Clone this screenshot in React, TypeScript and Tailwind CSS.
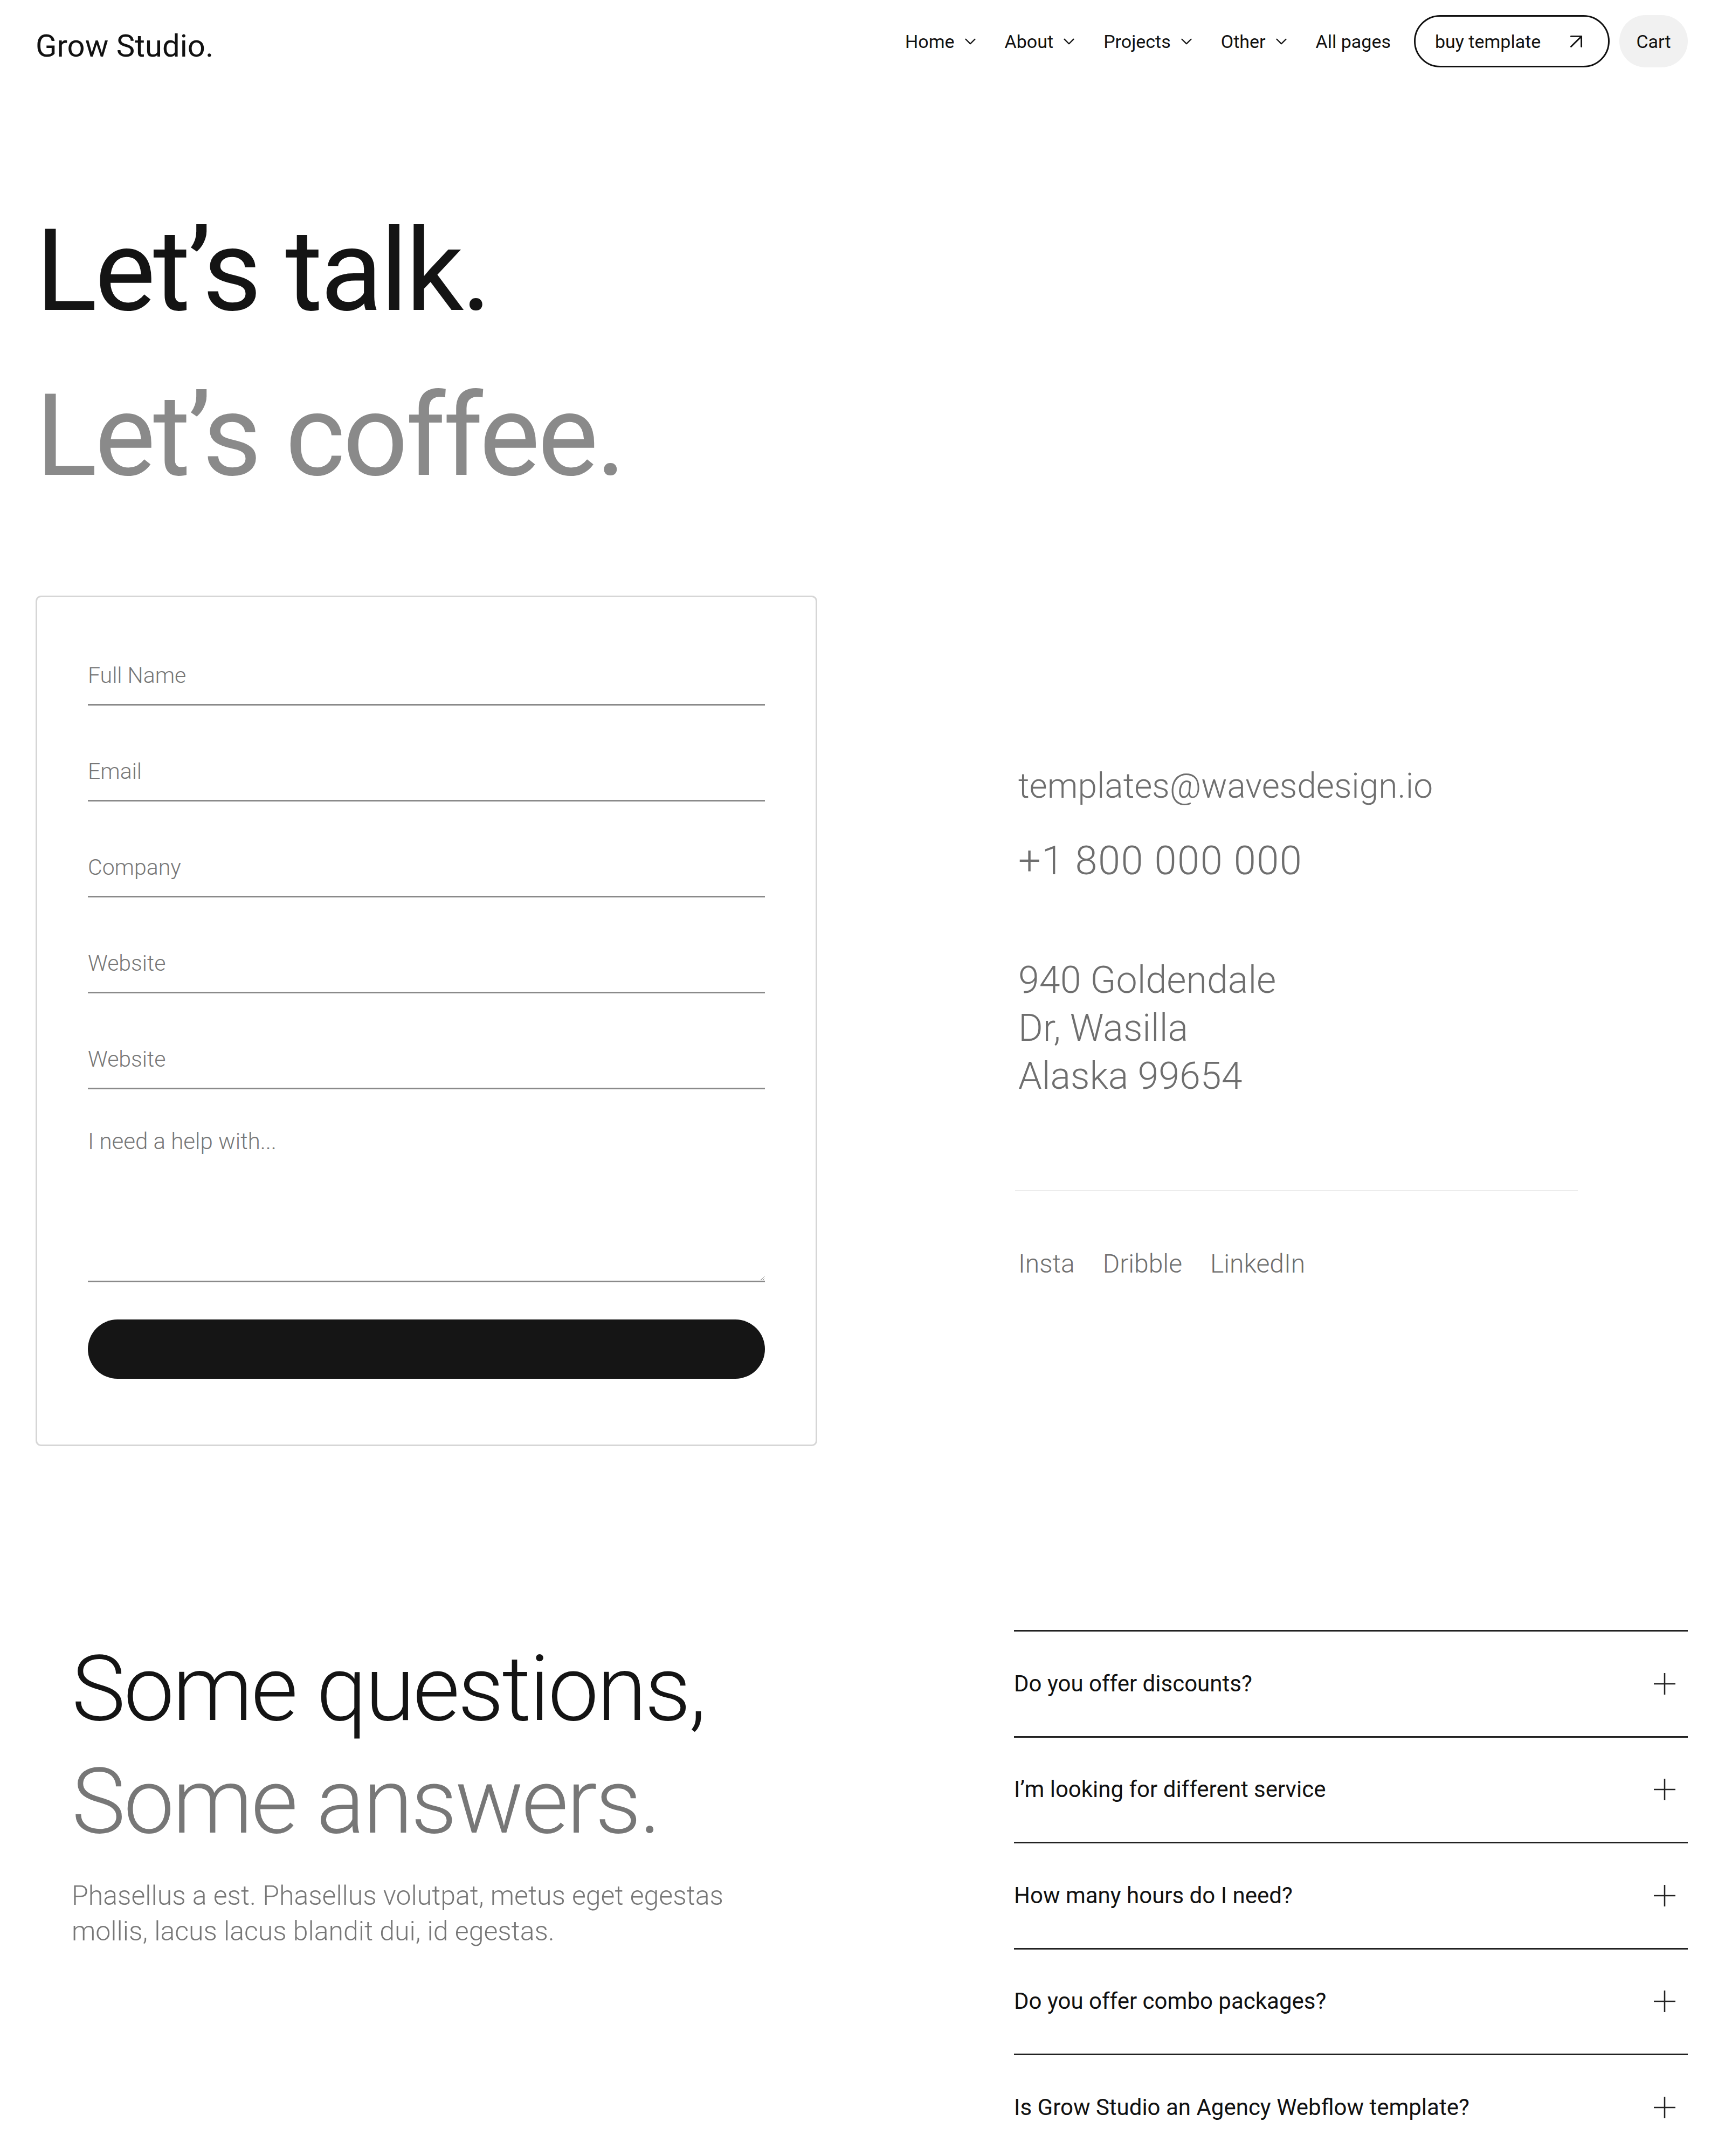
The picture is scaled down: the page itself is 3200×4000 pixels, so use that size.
import React from "react";
import { ChevronDown, ArrowUpRight } from "lucide-react";

const font = "font-['Roboto','Liberation_Sans',sans-serif]";

function NavLink({ label, chevron = true }: { label: string; chevron?: boolean }) {
  return (
    <div className="flex items-center gap-[12px] text-[34px] text-[#111] leading-none">
      <span>{label}</span>
      {chevron && <ChevronDown size={34} strokeWidth={1.7} className="text-[#111]" />}
    </div>
  );
}

function Plus() {
  return (
    <svg width="42" height="42" viewBox="0 0 42 42" fill="none" stroke="#222" strokeWidth="2.6">
      <line x1="21" y1="1" x2="21" y2="41" />
      <line x1="1" y1="21" x2="41" y2="21" />
    </svg>
  );
}

const inputCls =
  "block w-full h-[109px] border-0 border-b-[3px] border-solid border-[#8a8a8a] bg-transparent p-0 text-[41px] font-light text-[#333] placeholder:text-[#777] outline-none " +
  font;

const faqs = [
  "Do you offer discounts?",
  "I’m looking for different service",
  "How many hours do I need?",
  "Do you offer combo packages?",
  "Is Grow Studio an Agency Webflow template?",
];

export default function App() {
  return (
    <div className={`w-[3200px] min-h-[4000px] bg-white ${font} text-[#111]`}>
      {/* Nav */}
      <header className="flex items-center justify-between pl-[66px] pr-[69px] pt-[28px]">
        <div className="pt-[16px] text-[58px] leading-none text-[#111]">Grow Studio.</div>
        <nav className="flex items-center">
          <div className="flex items-center gap-[47px]">
            <NavLink label="Home" />
            <NavLink label="About" />
            <NavLink label="Projects" />
            <NavLink label="Other" />
            <NavLink label="All pages" chevron={false} />
          </div>
          <div className="ml-[43px] flex h-[97px] w-[363px] items-center justify-between rounded-full border-[3px] border-solid border-[#111] pl-[36px] pr-[36px] text-[34px] leading-none">
            <span>buy template</span>
            <ArrowUpRight size={46} strokeWidth={1.5} />
          </div>
          <div className="ml-[18px] flex h-[97px] w-[127px] items-center justify-center rounded-full bg-[#f1f1f1] text-[34px] leading-none">
            Cart
          </div>
        </nav>
      </header>

      <main className="pl-[66px] pr-[69px]">
        {/* Hero heading */}
        <h1 className="mt-[225px] text-[212px] font-normal leading-[306px] tracking-[-0.02em]">
          <span className="block text-[#141414]">Let’s talk.</span>
          <span className="block text-[#8a8a8a]">Let’s coffee.</span>
        </h1>

        {/* Form + contact */}
        <section className="mt-[143px] flex items-center">
          <form className="w-[1450px] shrink-0 rounded-[10px] border-[3px] border-solid border-[#d6d6d6] px-[94px] pt-[92px] pb-[122px]">
            <div className="flex flex-col gap-[69px]">
              <input className={inputCls} placeholder="Full Name" />
              <input className={inputCls} placeholder="Email" />
              <input className={inputCls} placeholder="Company" />
              <input className={inputCls} placeholder="Website" />
              <input className={inputCls} placeholder="Website" />
              <textarea
                className={
                  "block w-full h-[289px] border-0 border-b-[3px] border-solid border-[#8a8a8a] bg-transparent px-0 pt-[4px] pb-0 text-[42px] leading-[48px] font-light text-[#333] placeholder:text-[#777] outline-none " +
                  font
                }
                placeholder="I need a help with..."
              />
              <button type="button" className="block h-[110px] w-full rounded-full bg-[#151515]" />
            </div>
          </form>

          <div className="ml-[367px] w-[1044px] font-light text-[#6e6e6e]">
            <div className="pl-[6px]">
              <div className="text-[64px] leading-[89px]">templates@wavesdesign.io</div>
              <div className="mt-[49px] text-[74px] leading-[89px] tracking-[1.5px]">+1 800 000 000</div>
              <div className="mt-[133px] text-[70px] leading-[89px]">
                940 Goldendale
                <br />
                Dr, Wasilla
                <br />
                Alaska 99654
              </div>
            </div>
            <div className="mt-[167px] h-[2px] w-full bg-[#ececec]" />
            <div className="mt-[105px] flex gap-[52px] pl-[6px] text-[48px] leading-[60px]">
              <span>Insta</span>
              <span>Dribble</span>
              <span>LinkedIn</span>
            </div>
          </div>
        </section>

        {/* FAQ */}
        <section className="mt-[341px] flex items-start">
          <div className="pl-[67px] pt-[5px]">
            <h2 className="text-[168px] font-light leading-[209px] tracking-[-0.02em]">
              <span className="block text-[#141414]">Some questions,</span>
              <span className="block text-[#777]">Some answers.</span>
            </h2>
            <p className="mt-[37px] text-[50px] font-light leading-[66px] text-[#777]">
              Phasellus a est. Phasellus volutpat, metus eget egestas
              <br />
              mollis, lacus lacus blandit dui, id egestas.
            </p>
          </div>
          <div className="ml-auto w-[1250px] shrink-0">
            {faqs.map((q) => (
              <div
                key={q}
                className="flex h-[196.5px] items-center justify-between border-t-[3px] border-solid border-[#222] pr-[22px]"
              >
                <span className="text-[42px] leading-none text-[#111]">{q}</span>
                <Plus />
              </div>
            ))}
            <div className="border-t-[3px] border-solid border-[#222]" />
          </div>
        </section>
      </main>
    </div>
  );
}
